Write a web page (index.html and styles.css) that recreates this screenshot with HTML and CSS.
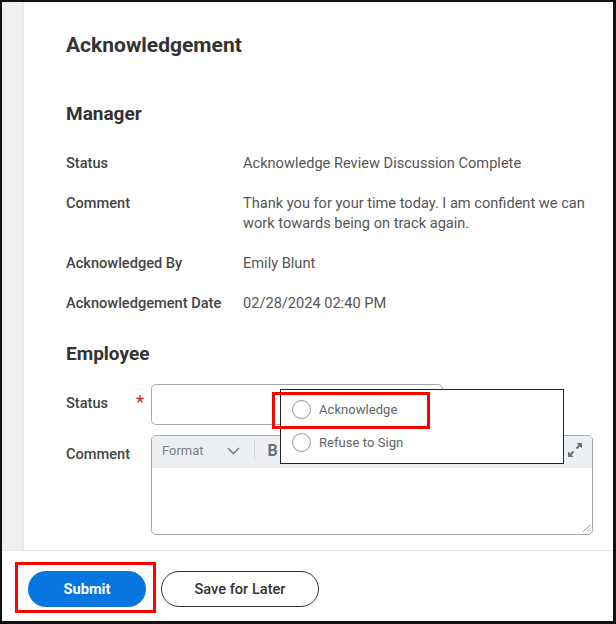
FILE: index.html
```html
<!DOCTYPE html>
<html lang="en">
<head>
<meta charset="utf-8">
<title>Acknowledgement</title>
<link rel="stylesheet" href="styles.css">
</head>
<body>
<div class="frame">
  <div class="main">
    <div class="rail"></div>
    <div class="content">
      <h1 class="title">Acknowledgement</h1>
      <h2 class="section">Manager</h2>
      <div class="fields">
        <div class="field"><div class="label">Status</div><div class="value">Acknowledge Review Discussion Complete</div></div>
        <div class="field"><div class="label">Comment</div><div class="value">Thank you for your time today. I am confident we can work towards being on track again.</div></div>
        <div class="field"><div class="label">Acknowledged By</div><div class="value">Emily Blunt</div></div>
        <div class="field"><div class="label">Acknowledgement Date</div><div class="value">02/28/2024 02:40 PM</div></div>
      </div>
      <h2 class="section employee">Employee</h2>
      <div class="form">
        <div class="form-row">
          <div class="form-label center"><span>Status</span><span class="req">*</span></div>
          <div class="select"></div>
        </div>
        <div class="form-row">
          <div class="form-label top"><span>Comment</span></div>
          <div class="editor">
            <div class="toolbar">
              <span class="format">Format</span>
              <svg class="chev" width="13" height="8" viewBox="0 0 13 8"><polyline points="1,1 6.5,6.5 12,1" fill="none" stroke="#7d8287" stroke-width="1.6"/></svg>
              <span class="sep"></span>
              <span class="bold-btn">B</span>
              <span class="spacer"></span>
              <svg class="expand" width="16" height="16" viewBox="0 0 16 16"><polygon points="9.5,1 15,1 15,6.5" fill="#6b7177"/><line x1="13" y1="3" x2="9.5" y2="6.5" stroke="#6b7177" stroke-width="2.2"/><polygon points="1,9.5 1,15 6.5,15" fill="#6b7177"/><line x1="3" y1="13" x2="6.5" y2="9.5" stroke="#6b7177" stroke-width="2.2"/></svg>
            </div>
            <div class="editor-body">
              <svg class="grip" width="8" height="8" viewBox="0 0 8 8"><line x1="1" y1="8" x2="8" y2="1" stroke="#9aa0a6" stroke-width="1"/><line x1="4.5" y1="8" x2="8" y2="4.5" stroke="#9aa0a6" stroke-width="1"/></svg>
            </div>
          </div>
        </div>
        <div class="popup">
          <div class="option"><span class="radio"></span><span>Acknowledge</span></div>
          <div class="option"><span class="radio"></span><span>Refuse to Sign</span></div>
        </div>
        <div class="highlight"></div>
      </div>
    </div>
  </div>
  <div class="footer">
    <div class="mark">
      <button class="btn primary">Submit</button>
    </div>
    <button class="btn secondary">Save for Later</button>
  </div>
</div>
</body>
</html>
```
FILE: styles.css
```css
* { box-sizing: border-box; }
html, body { margin: 0; padding: 0; background: #fff; }
body { font-family: Roboto, "Liberation Sans", Arial, sans-serif; color: #333; }

.frame {
  width: 616px;
  height: 624px;
  border-style: solid;
  border-color: #111;
  border-width: 2px 3px 3px 2px;
  display: flex;
  flex-direction: column;
  overflow: hidden;
}

.main {
  height: 548px;
  display: flex;
}
.rail {
  width: 22px;
  flex: none;
  background: linear-gradient(to right, #eff0f1 0, #eff0f1 19px, #e6e8ea 22px);
}
.content {
  flex: 1;
  padding: 31px 20px 0 42px;
}

.title {
  margin: 0;
  font-size: 21px;
  line-height: 24px;
  font-weight: 700;
  color: #333;
}
.section {
  margin: 46px 0 0;
  font-size: 19px;
  line-height: 22px;
  font-weight: 700;
  color: #333;
}
.section.employee { margin-top: 30px; }

.fields {
  margin-top: 28px;
  display: flex;
  flex-direction: column;
  gap: 20px;
}
.field {
  display: grid;
  grid-template-columns: 177px 1fr;
  font-size: 14.6px;
  line-height: 20px;
}
.label { font-weight: 500; color: #444; }
.value { color: #555; }

.form {
  position: relative;
  margin-top: 19px;
  display: flex;
  flex-direction: column;
  gap: 10px;
}
.form-row {
  display: flex;
}
.form-label {
  width: 85px;
  flex: none;
  display: flex;
  justify-content: space-between;
  padding-right: 7px;
  font-size: 14.6px;
  line-height: 20px;
  font-weight: 500;
  color: #444;
}
.form-label.center { align-items: center; padding-bottom: 3px; }
.form-label.top { padding-top: 9px; }
.req {
  color: #de2e21;
  font-size: 18px;
  line-height: 20px;
  margin-top: -3px;
  font-weight: 500;
}

.select {
  width: 292px;
  height: 41px;
  border: 1px solid #a4a8ad;
  border-radius: 5px;
}

.editor {
  width: 442px;
  height: 100px;
  border: 1px solid #a4a8ad;
  border-radius: 5px;
  display: flex;
  flex-direction: column;
  overflow: hidden;
}
.toolbar {
  height: 32px;
  background: #ecf0f2;
  display: flex;
  align-items: center;
  padding: 0 9px 4px 10px;
}
.format {
  font-size: 13px;
  color: #7b7f84;
}
.chev { margin-left: 23px; margin-top: 2px; }
.sep {
  width: 1px;
  height: 18px;
  background: #d3d7db;
  margin-left: 14px;
}
.bold-btn {
  margin-left: 13px;
  font-size: 16px;
  font-weight: 700;
  color: #6b7177;
}
.spacer { flex: 1; }
.expand { margin-top: -1px; }
.editor-body {
  flex: 1;
  position: relative;
  display: flex;
  justify-content: flex-end;
  align-items: flex-end;
  padding: 0 2px 2px 0;
}

.popup {
  position: absolute;
  left: 214px;
  top: 5px;
  width: 284px;
  height: 75px;
  background: #fff;
  border: 1px solid #222;
  padding: 3px 0 0 11px;
  display: flex;
  flex-direction: column;
}
.option {
  height: 33px;
  display: flex;
  align-items: center;
  gap: 8px;
  font-size: 13px;
  letter-spacing: 0.05px;
  color: #5f6368;
}
.radio {
  width: 19px;
  height: 19px;
  border: 1.5px solid #8f959b;
  border-radius: 50%;
  flex: none;
}
.highlight {
  position: absolute;
  left: 206px;
  top: 8px;
  width: 158px;
  height: 37px;
  border: 3px solid #f00;
}

.footer {
  height: 71px;
  border-top: 1px solid #e3e5e8;
  padding: 11px 0 0 13px;
  display: flex;
  align-items: flex-start;
  gap: 5px;
}
.mark {
  border: 3px solid #f00;
  padding: 6px 7px 3px 10px;
}
.btn {
  height: 36px;
  border-radius: 18px;
  font-family: Roboto, "Liberation Sans", Arial, sans-serif;
  font-size: 14.6px;
  font-weight: 500;
  cursor: pointer;
}
.primary {
  width: 118px;
  background: #0875e1;
  color: #fff;
  border: none;
  font-weight: 700;
}
.secondary {
  margin-top: 9px;
  width: 158px;
  background: #fff;
  color: #333;
  border: 1px solid #333;
}
```
